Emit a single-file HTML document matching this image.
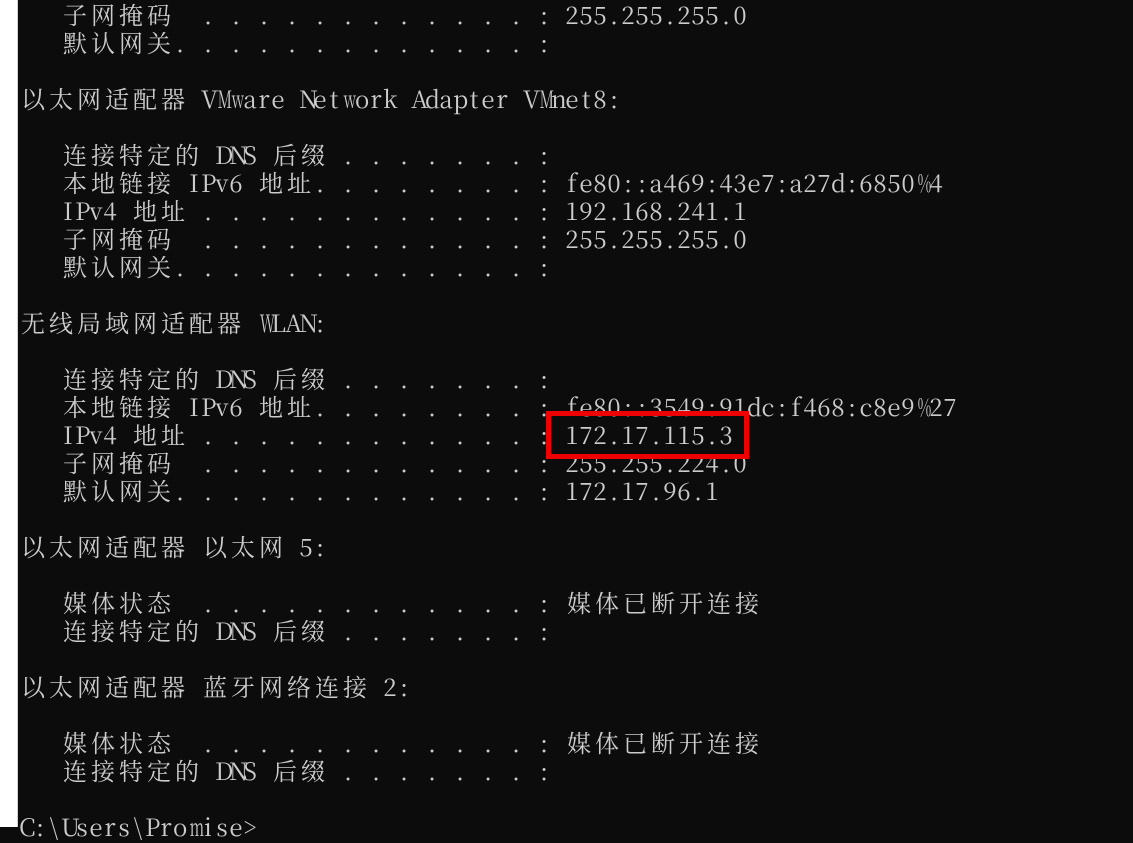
<!DOCTYPE html>
<html><head><meta charset="utf-8"><style>
html,body{margin:0;padding:0;}
body{width:1133px;height:827px;overflow:hidden;background:#0c0c0c;position:relative;}
#strip{position:absolute;left:0;top:0;width:17px;height:827px;background:#fff;border-right:1px solid #d0d0d0;}
.c{position:absolute;color:#cccccc;font-size:24px;line-height:28px;height:28px;white-space:pre;text-align:center;font-family:"Noto Serif CJK SC","Liberation Serif",serif;}
.a{width:14px;}
.w{width:28px;}
.n{transform:scaleX(0.62);}
#box{position:absolute;left:546px;top:411px;width:193px;height:38px;border:5px solid #ee0000;}
</style></head><body>
<div id="strip"></div>
<div id="t"></div>
<div id="box"></div>
<script>
var L=[
"   子网掩码  . . . . . . . . . . . . : 255.255.255.0",
"   默认网关. . . . . . . . . . . . . :",
"",
"以太网适配器 VMware Network Adapter VMnet8:",
"",
"   连接特定的 DNS 后缀 . . . . . . . :",
"   本地链接 IPv6 地址. . . . . . . . : fe80::a469:43e7:a27d:6850%4",
"   IPv4 地址 . . . . . . . . . . . . : 192.168.241.1",
"   子网掩码  . . . . . . . . . . . . : 255.255.255.0",
"   默认网关. . . . . . . . . . . . . :",
"",
"无线局域网适配器 WLAN:",
"",
"   连接特定的 DNS 后缀 . . . . . . . :",
"   本地链接 IPv6 地址. . . . . . . . : fe80::3549:91dc:f468:c8e9%27",
"   IPv4 地址 . . . . . . . . . . . . : 172.17.115.3",
"   子网掩码  . . . . . . . . . . . . : 255.255.224.0",
"   默认网关. . . . . . . . . . . . . : 172.17.96.1",
"",
"以太网适配器 以太网 5:",
"",
"   媒体状态  . . . . . . . . . . . . : 媒体已断开连接",
"   连接特定的 DNS 后缀 . . . . . . . :",
"",
"以太网适配器 蓝牙网络连接 2:",
"",
"   媒体状态  . . . . . . . . . . . . : 媒体已断开连接",
"   连接特定的 DNS 后缀 . . . . . . . :",
"",
"C:\\Users\\Promise>"
];
var h="",narrow="WMmw%";
for(var i=0;i<L.length;i++){var col=0,s=L[i];
for(var j=0;j<s.length;j++){var ch=s[j],wide=ch.charCodeAt(0)>255;
if(ch!=" "){var t=ch.replace("&","&amp;").replace("<","&lt;");
var cls='c '+(wide?'w':'a')+(narrow.indexOf(ch)>=0?' n':'');
h+='<span class="'+cls+'" style="left:'+(19+col*14)+'px;top:'+(0+i*28)+'px">'+t+'</span>';}
col+=wide?2:1;}}
document.getElementById("t").innerHTML=h;
</script>
</body></html>
